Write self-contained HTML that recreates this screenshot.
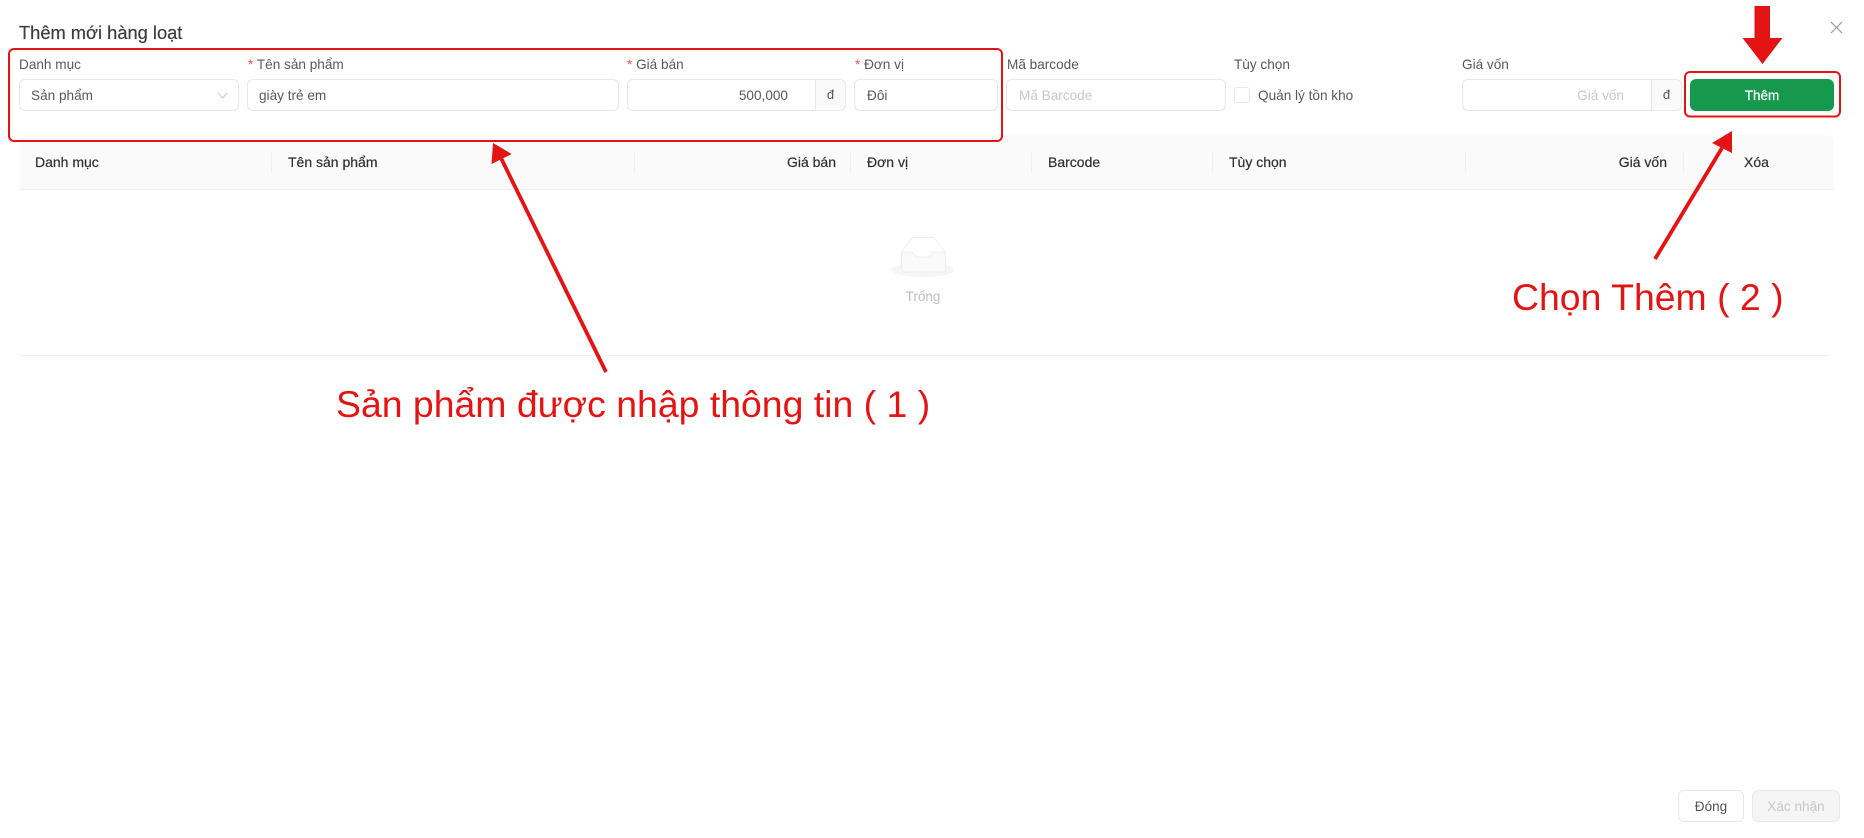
<!DOCTYPE html>
<html lang="vi"><head><meta charset="utf-8"><title>Thêm mới hàng loạt</title>
<style>
html,body{margin:0;padding:0;background:#fff}
body{position:relative;width:1864px;height:838px;overflow:hidden;font-family:"Liberation Sans",sans-serif;font-size:13.6px;color:#595959}
#ui{position:absolute;left:0;top:0;width:1864px;height:838px;filter:blur(.3px)}
.t{position:absolute;line-height:20px;height:20px;white-space:nowrap}
.r{text-align:right}
.box{position:absolute;box-sizing:border-box;height:32px;top:79px;border:1.5px solid #e8e8e8;border-radius:6px;background:#fff}
.h{position:absolute;line-height:20px;top:152px;white-space:nowrap;color:#303030;font-size:14px;-webkit-text-stroke:.2px #303030}
.sep{position:absolute;top:151px;height:22px;width:1px;background:#f0f0f0}
.star{color:#ff4d4f}
.ph{color:#c8c8c8}
.addon{position:absolute;box-sizing:border-box;top:79px;height:32px;background:#fafafa;border:1.5px solid #e8e8e8;border-left:1px solid #e8e8e8;border-radius:0 6px 6px 0;text-align:center;line-height:30px;font-size:13px}
.ann{position:absolute;color:#e31414;white-space:nowrap;line-height:44px;height:44px}
svg{position:absolute;left:0;top:0}
</style></head><body>
<div id="ui">
<div class="t" style="left:19px;top:23px;font-size:18.3px;color:#3c3c3c;-webkit-text-stroke:.2px #3c3c3c">Thêm mới hàng loạt</div>

<div class="t" style="left:19px;top:55px">Danh mục</div>
<div class="t" style="left:248px;top:55px"><span class="star">*</span> Tên sản phẩm</div>
<div class="t" style="left:627px;top:55px"><span class="star">*</span> Giá bán</div>
<div class="t" style="left:855px;top:55px"><span class="star">*</span> Đơn vị</div>
<div class="t" style="left:1007px;top:55px">Mã barcode</div>
<div class="t" style="left:1234px;top:55px">Tùy chọn</div>
<div class="t" style="left:1462px;top:55px">Giá vốn</div>

<div class="box" style="left:19px;width:220px"></div>
<div class="t" style="left:31px;top:86px">Sản phẩm</div>
<div class="box" style="left:247px;width:372px"></div>
<div class="t" style="left:259px;top:86px">giày trẻ em</div>
<div class="box" style="left:627px;width:189px;border-radius:6px 0 0 6px;border-right:0"></div>
<div class="t r" style="left:627px;width:161px;top:86px">500,000</div>
<div class="addon" style="left:815px;width:31px">đ</div>
<div class="box" style="left:854px;width:144px"></div>
<div class="t" style="left:867px;top:86px">Đôi</div>
<div class="box" style="left:1006px;width:220px"></div>
<div class="t ph" style="left:1019px;top:86px">Mã Barcode</div>
<div class="box" style="left:1234px;top:87px;width:16px;height:16px;border-radius:3px"></div>
<div class="t" style="left:1258px;top:86px">Quản lý tồn kho</div>
<div class="box" style="left:1462px;width:190px;border-radius:6px 0 0 6px;border-right:0"></div>
<div class="t r ph" style="left:1462px;width:162px;top:86px">Giá vốn</div>
<div class="addon" style="left:1651px;width:31px">đ</div>
<div style="position:absolute;left:1690px;top:79px;width:144px;height:32px;background:#16994d;border-radius:6px;color:#fff;text-align:center;line-height:33px;font-size:13.5px;-webkit-text-stroke:.2px #fff">Thêm</div>

<div style="position:absolute;left:19px;top:135px;width:1815px;height:55px;background:#fafafa;border-bottom:1px solid #f0f0f0;box-sizing:border-box;border-radius:6px 6px 0 0"></div>
<div class="sep" style="left:271px"></div><div class="sep" style="left:634px"></div><div class="sep" style="left:850px"></div><div class="sep" style="left:1031px"></div><div class="sep" style="left:1212px"></div><div class="sep" style="left:1465px"></div><div class="sep" style="left:1683px"></div>
<div class="h" style="left:35px">Danh mục</div>
<div class="h" style="left:288px">Tên sản phẩm</div>
<div class="h r" style="left:700px;width:136px">Giá bán</div>
<div class="h" style="left:867px">Đơn vị</div>
<div class="h" style="left:1048px">Barcode</div>
<div class="h" style="left:1229px">Tùy chọn</div>
<div class="h r" style="left:1530px;width:137px">Giá vốn</div>
<div class="h" style="left:1744px">Xóa</div>

<div style="position:absolute;left:19px;top:355px;width:1810px;height:1px;background:#f2f2f2"></div>
<div class="t" style="left:863px;width:120px;text-align:center;top:287px;color:#bfbfbf;font-size:13.5px">Trống</div>

<div style="position:absolute;box-sizing:border-box;left:1678px;top:790px;width:66px;height:32px;border:1.5px solid #e8e8e8;border-radius:6px;text-align:center;line-height:31px;color:#555">Đóng</div>
<div style="position:absolute;box-sizing:border-box;left:1752px;top:790px;width:88px;height:32px;border:1.5px solid #e8e8e8;border-radius:6px;background:#f5f5f5;text-align:center;line-height:31px;color:#c8c8c8">Xác nhận</div>

<svg width="1864" height="838" viewBox="0 0 1864 838" fill="none">
  <path d="M218 93l4.500 5 4.500-5" stroke="#c8c8c8" stroke-width="1"/>
  <path d="M1831 22l11 11M1842 22l-11 11" stroke="#999" stroke-width="1.200"/>
  <ellipse cx="923" cy="270" rx="31.500" ry="7" fill="#f6f6f6"/>
  <path d="M901.500 252l11-14.500h21l11.500 14.500v17a3 3 0 0 1-3 3h-37.500a3 3 0 0 1-3-3z" fill="#fff" stroke="#efefef" stroke-width="1"/>
  <path d="M901.500 252h9.500c1.800 0 2.500 .8 3 2.300s1.500 2.700 3.500 2.700h10.500c2 0 3-1.200 3.500-2.700s1.200-2.300 3-2.300h11v17a3 3 0 0 1-3 3h-37.500a3 3 0 0 1-3-3z" fill="#fafafa" stroke="#efefef" stroke-width="1"/>
</svg>
</div>

<svg width="1864" height="838" viewBox="0 0 1864 838" fill="none">
  <rect x="9" y="49" width="993" height="92" rx="5" stroke="#e31414" stroke-width="2"/>
  <rect x="1685" y="72" width="155" height="44.500" rx="5" stroke="#e31414" stroke-width="2"/>
  <path d="M1754.500 6h15.500v32h12.500l-20 26-20-26h12z" fill="#e31414"/>
  <path d="M606 372L501 158" stroke="#e31414" stroke-width="3.800"/>
  <path d="M493 143L511.700 154 491.500 164z" fill="#e31414"/>
  <path d="M1655 259L1722 148" stroke="#e31414" stroke-width="3.800"/>
  <path d="M1732 131L1712 143 1732 153z" fill="#e31414"/>
</svg>

<div class="ann" style="left:336px;top:382px;font-size:37.400px">Sản phẩm được nhập thông tin ( 1 )</div>
<div class="ann" style="left:1512px;top:275px;font-size:37.400px">Chọn Thêm ( 2 )</div>
</body></html>
